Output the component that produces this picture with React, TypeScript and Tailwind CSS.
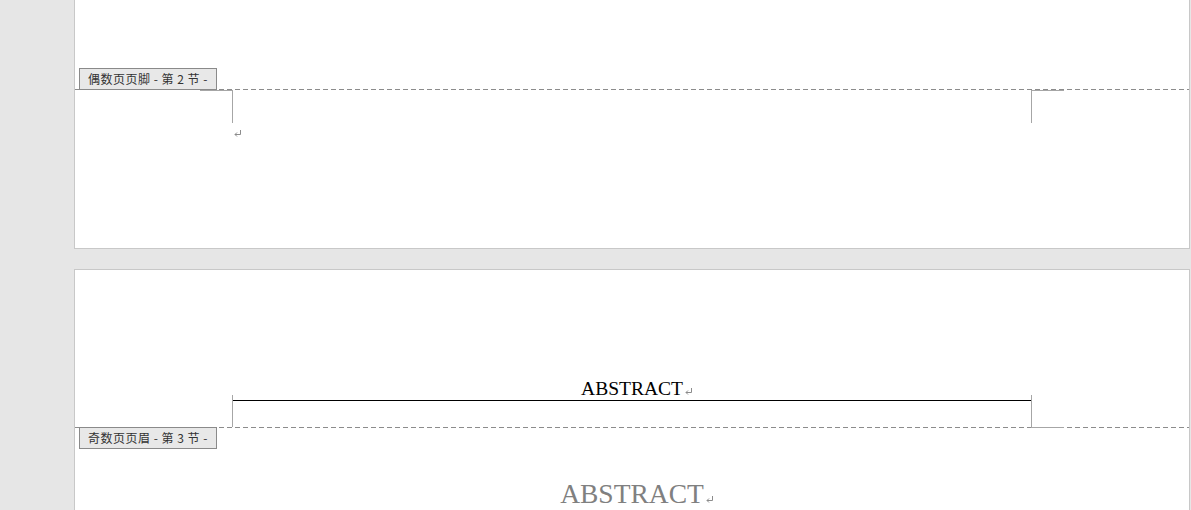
import React from "react";

const dash =
  "bg-[repeating-linear-gradient(to_right,#8c8c8c_0_5px,transparent_5px_8px)]";

function ReturnMark({ className = "" }: { className?: string }) {
  return (
    <svg
      width="8"
      height="7"
      viewBox="0 0 8 7"
      className={className}
      fill="none"
      stroke="#8c8c8c"
      strokeWidth="1"
    >
      <path d="M6.5 0 V4.5 H1" />
      <path d="M3 2.5 L1 4.5 L3 6.5" />
    </svg>
  );
}

// paragraph mark hangs after the centred text without shifting it
function HangingMark() {
  return (
    <span className="inline-block w-0 overflow-visible whitespace-nowrap">
      <ReturnMark className="ml-[2px] inline-block align-baseline" />
    </span>
  );
}

function SectionLabel({ text, pos }: { text: string; pos: string }) {
  return (
    <div
      className={`absolute left-[4px] ${pos} flex h-[22px] w-[138px] items-center justify-center border border-[#8a8a8a] bg-[#e8e8e8] text-[12px] tracking-[0.5px] text-[#333] font-['Noto_Sans_CJK_SC',sans-serif] leading-none`}
    >
      {text}
    </div>
  );
}

export default function App() {
  return (
    <div className="flex h-[510px] overflow-hidden bg-[#e6e6e6]">
      <div className="w-[74px] shrink-0" />

      <div className="flex w-[1116px] shrink-0 flex-col gap-[20px]">
        {/* Page 1 (bottom part) */}
        <div className="flex h-[249px] shrink-0 flex-col border-x border-b border-[#c8c8c8] bg-white">
          <div className="h-[89px]" />
          <div className={`relative h-px ${dash}`}>
            <SectionLabel text="偶数页页脚 - 第 2 节 -" pos="bottom-0" />
          </div>
          <div className="relative mx-[157px]">
            <div className="absolute left-0 top-0 h-[33px] w-px bg-[#a6a6a6]" />
            <div className="absolute left-[-32px] top-0 h-px w-[32px] bg-[#a6a6a6]" />
            <div className="absolute right-0 top-0 h-[33px] w-px bg-[#a6a6a6]" />
            <div className="absolute right-[-32px] top-0 h-px w-[32px] bg-[#a6a6a6]" />
            <div className="pl-[2px] pt-[40px]">
              <ReturnMark className="block" />
            </div>
          </div>
        </div>

        {/* Page 2 (top part) */}
        <div className="flex flex-1 flex-col border-x border-t border-[#c8c8c8] bg-white">
          <div className="h-[107px] shrink-0" />
          <div className="relative mx-[157px]">
            <p className="border-b border-black text-center font-['Liberation_Serif',serif] text-[19.5px] leading-[23px] text-black">
              ABSTRACT
              <HangingMark />
            </p>
            <div className="h-[26px]" />
            <div className="absolute left-0 top-[18px] h-[32px] w-px bg-[#a6a6a6]" />
            <div className="absolute right-0 top-[18px] h-[32px] w-px bg-[#a6a6a6]" />
          </div>
          <div className={`relative h-px ${dash}`}>
            <div className="absolute left-[956px] top-0 h-px w-[33px] bg-[#a6a6a6]" />
            <SectionLabel text="奇数页页眉 - 第 3 节 -" pos="top-0" />
          </div>
          <div className="h-[50px] shrink-0" />
          <p className="mx-[157px] text-center font-['Liberation_Serif',serif] text-[27.5px] leading-[32px] text-[#808080]">
            ABSTRACT
            <HangingMark />
          </p>
        </div>
      </div>
    </div>
  );
}
